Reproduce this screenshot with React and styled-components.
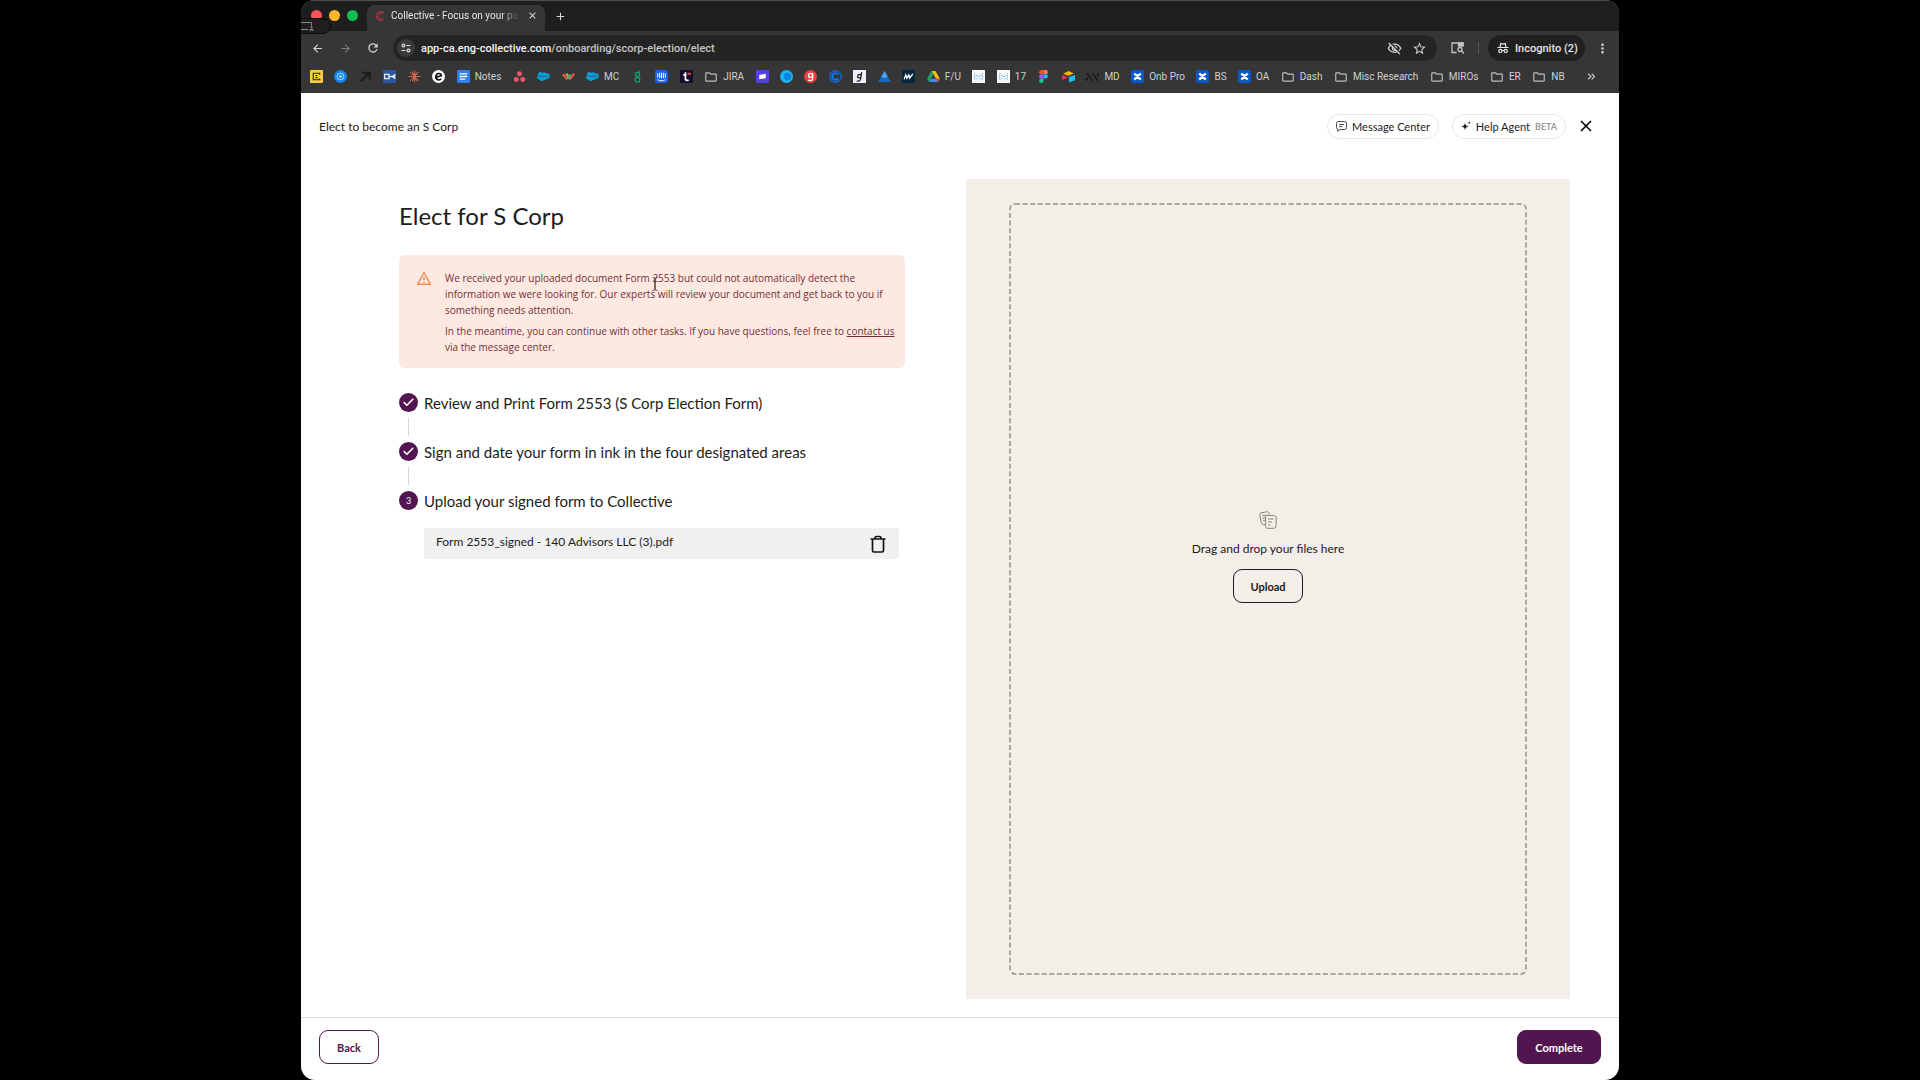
import React from "react";
import styled, { createGlobalStyle } from "styled-components";
import { Check } from "lucide-react";
import { FaSalesforce } from "react-icons/fa";
import {
  MdArrowBack,
  MdArrowForward,
  MdRefresh,
  MdOutlineFolder,
  MdStarBorder,
  MdOutlineVisibilityOff,
  MdMoreVert,
  MdClose,
  MdAdd,
  MdKeyboardDoubleArrowRight,
} from "react-icons/md";

const GlobalStyle = createGlobalStyle`
  * {
    box-sizing: border-box;
  }

  body {
    margin: 0;
    background: #000000;
    font-family: Lato, "Liberation Sans", sans-serif;
    color: #1c1c1c;
  }

  button {
    font-family: inherit;
    margin: 0;
    padding: 0;
    border: none;
    background: none;
    color: inherit;
    cursor: pointer;
  }

  svg {
    display: block;
    flex-shrink: 0;
  }
`;

// Browser window
const Desktop = styled.div`
  height: 100vh;
  padding: 0 301px;
`;

const Window = styled.div`
  position: relative;
  height: 100%;
  display: flex;
  flex-direction: column;
  background: #ffffff;
  border-radius: 14px;
  overflow: hidden;
`;

const Chrome = styled.header`
  font-family: Roboto, "Liberation Sans", sans-serif;
  background: #363636;
  color: #d6d6d6;
`;

const TabStrip = styled.div`
  display: flex;
  align-items: center;
  height: 31px;
  padding-left: 10px;
  background: #1e1e1e;
  border-top: 1px solid #4c4c4c;
`;

const TrafficLights = styled.div`
  display: flex;
  gap: 7px;
  margin: 0 9px 2px 0;
`;

const Light = styled.span`
  width: 11px;
  height: 11px;
  border-radius: 50%;
  background: ${(props) => props.$color};
`;

const Tab = styled.div`
  display: flex;
  align-items: center;
  align-self: flex-end;
  width: 178px;
  height: 26px;
  padding: 0 8px 5px;
  border-radius: 8px 8px 0 0;
  background: #363636;
  margin-right: 8px;
`;

const TabTitle = styled.span`
  flex: 1;
  margin: 0 8px 0 6px;
  white-space: nowrap;
  font-size: 10px;
  color: #e6e6e6;
  mask-image: linear-gradient(90deg, #000 85%, transparent);
`;

const IconButton = styled.button`
  display: flex;
  align-items: center;
  justify-content: center;
  width: ${(props) => props.$size || 14}px;
  height: ${(props) => props.$size || 14}px;
  color: ${(props) => props.$color || "#d6d6d6"};
`;

const ShareBadge = styled.div`
  position: absolute;
  top: 18px;
  left: -12px;
  width: 42px;
  height: 16px;
  padding: 3px 0 0 11px;
  border: 1px solid #0c0c0c;
  border-radius: 8px;
  background: #1e1e1e;
`;

const Toolbar = styled.div`
  display: flex;
  align-items: center;
  height: 34px;
  padding: 0 10px 0 9px;
`;

const NavButtons = styled.div`
  display: flex;
  gap: 14px;
  margin-right: 13px;
`;

const AddressBar = styled.div`
  flex: 1;
  display: flex;
  align-items: center;
  height: 26px;
  padding: 0 11px 0 4px;
  border-radius: 13px;
  background: #242424;
`;

const SiteInfo = styled.button`
  display: flex;
  align-items: center;
  justify-content: center;
  width: 18px;
  height: 18px;
  border-radius: 50%;
  background: #3a3a3a;
`;

const Url = styled.div`
  flex: 1;
  margin-left: 6px;
  font-size: 11px;
  font-weight: 500;
  color: #c4c4c4;

  b {
    font-weight: 500;
    color: #f4f4f4;
  }
`;

const AddressActions = styled.div`
  display: flex;
  gap: 11px;
`;

const SidePanel = styled.div`
  margin: 0 13px 0 14px;
`;

const ToolbarDivider = styled.span`
  width: 1px;
  height: 12px;
  margin-right: 9px;
  background: #5a5a5a;
`;

const IncognitoChip = styled.div`
  display: flex;
  align-items: center;
  gap: 6px;
  height: 26px;
  width: 97px;
  padding: 0 9px;
  margin-right: 10px;
  border-radius: 13px;
  background: #202020;
  font-size: 11px;
  font-weight: 500;
  white-space: nowrap;
  color: #e6e6e6;
`;

const BookmarksBar = styled.nav`
  display: flex;
  align-items: center;
  height: 28px;
  padding: 0 22px 5px 9px;
`;

const BookmarkList = styled.div`
  flex: 1;
  display: flex;
  align-items: center;
  justify-content: space-between;
  margin-right: 20px;
`;

const Bookmark = styled.a`
  display: flex;
  align-items: center;
  gap: 5px;
  height: 14px;
  font-size: 10px;
  line-height: 14px;
  white-space: nowrap;
  color: #d0d0d0;
  text-decoration: none;
`;

// Onboarding page
const PageHeader = styled.div`
  display: flex;
  align-items: center;
  height: 66px;
  padding: 0 26px 0 18px;
`;

const PageName = styled.span`
  flex: 1;
  font-size: 12px;
`;

const PillButton = styled.button`
  display: flex;
  align-items: center;
  justify-content: center;
  gap: 5px;
  width: ${(props) => props.$width}px;
  height: 25px;
  margin-right: 13px;
  border: 1px solid #e8e8e8;
  border-radius: 13px;
  font-size: 11px;
  white-space: nowrap;
`;

const Beta = styled.span`
  font-size: 9px;
  font-weight: 700;
  color: #9a9a9a;
`;

const Main = styled.main`
  flex: 1;
  min-height: 0;
  display: grid;
  grid-template-columns: 506fr 604fr;
  gap: 61px;
  padding: 20px 49px 18px 98px;
`;

const Title = styled.h1`
  margin: 20px 0 23px;
  font-size: 24px;
  line-height: 33px;
  font-weight: 400;
`;

const Alert = styled.div`
  position: relative;
  display: flex;
  gap: 13px;
  padding: 15px 10px 13px 17px;
  border-radius: 5px;
  background: #fee9e1;
  font-family: "Open Sans", "Liberation Sans", sans-serif;
  font-size: 10px;
  line-height: 16px;
  color: #722f37;

  p {
    margin: 0 0 5px;
  }

  p:last-child {
    margin: 0;
  }

  a {
    color: inherit;
  }
`;

const TextCursor = styled.svg`
  position: absolute;
  top: 22px;
  left: 252px;
`;

const Steps = styled.ol`
  list-style: none;
  margin: 25px 0 0;
  padding: 0;
`;

const Step = styled.li`
  display: flex;
  align-items: center;
  gap: 6px;
  height: 19px;
  font-size: 15px;
`;

const StepDot = styled.span`
  display: flex;
  align-items: center;
  justify-content: center;
  width: 19px;
  height: 19px;
  border-radius: 50%;
  background: #52154f;
  color: #ffffff;
  font-size: 9px;
`;

const Connector = styled.li`
  width: 1px;
  height: 18px;
  margin: 6px 0 6px 9px;
  background: #d6d6d6;
`;

const FileRow = styled.div`
  display: flex;
  align-items: center;
  justify-content: space-between;
  height: 31px;
  margin: 18px 6px 0 25px;
  padding: 0 12px;
  border-radius: 3px;
  background: #f0f0f0;
  font-size: 12px;
`;

const FileName = styled.span`
  padding-bottom: 5px;
`;

const DropPanel = styled.section`
  padding: 25px 44px;
  background: #f1efe8;
`;

const DropZone = styled.div`
  position: relative;
  display: flex;
  flex-direction: column;
  align-items: center;
  justify-content: center;
  gap: 12px;
  height: 100%;
  padding-bottom: 64px;
  border-radius: 5px;
  background: #f3eee8;
  font-size: 12px;
  line-height: 16px;
`;

const DashedOutline = styled.svg`
  position: absolute;
  inset: 0;
  width: 100%;
  height: 100%;
  overflow: visible;
  pointer-events: none;
`;

const Button = styled.button`
  width: ${(props) => props.$width}px;
  height: 34px;
  border: 1px solid ${(props) => props.$border || "#52154f"};
  border-radius: 9px;
  background: ${(props) => (props.$filled ? "#52154f" : "transparent")};
  color: ${(props) => (props.$filled ? "#ffffff" : props.$border || "#52154f")};
  font-size: 11px;
  font-weight: 700;
`;

const PageFooter = styled.footer`
  display: flex;
  justify-content: space-between;
  height: 63px;
  padding: 12px 18px 0;
  border-top: 1px solid #d9d9d9;
`;

// Favicons share a 12 unit box
const Fav = ({ children }) => (
  <svg width="13" height="13" viewBox="0 0 12 12" fill="none">
    {children}
  </svg>
);

const Tile = ({ color, radius = 1, children }) => (
  <Fav>
    <rect width="12" height="12" rx={radius} fill={color} />
    {children}
  </Fav>
);

const Jira = () => (
  <Tile color="#0c57c9" radius={2}>
    <path d="M3 3.2C5 5.6 7 5.6 9 3.2M3 8.8C5 6.4 7 6.4 9 8.8" stroke="#fff" strokeWidth="2" />
  </Tile>
);

const MetricGrid = () => (
  <Tile color="#f7fafc" radius={0}>
    <path
      d="M2.5 3v6.5M9.5 3v6.5M4 4.5l2 2 2-2M4.5 7.5v2M7.5 7.5v2"
      stroke="#6fa9cf"
      strokeWidth="1"
      strokeDasharray="1 .7"
    />
  </Tile>
);

const Folder = () => <MdOutlineFolder size={14} color="#bdbdbd" />;
const Salesforce = () => <FaSalesforce size={13} color="#0d9dda" />;

const bookmarks = [
  {
    icon: (
      <Tile color="#f9cf45">
        <path d="M3 2.5v7M2.5 3h7M2.5 9h7M9 3v1.5M9 7.5V9M5 5h2M5 7h2" stroke="#2a2413" strokeWidth="1" />
      </Tile>
    ),
  },
  {
    icon: (
      <Fav>
        <circle cx="6" cy="6" r="6" fill="#1687ee" />
        <circle cx="6" cy="6" r="3" stroke="#8fd0ff" strokeWidth="1" />
        <circle cx="6" cy="6" r="1.2" fill="#bfe4ff" />
      </Fav>
    ),
  },
  {
    icon: (
      <Fav>
        <path d="M1.5 10.5L9 3M3 2.5h7v7" stroke="#1c1c1c" strokeWidth="2" />
      </Fav>
    ),
  },
  {
    icon: (
      <Tile color="#2f55a5" radius={0}>
        <path d="M1.5 4h4v4h-4zM6 6h5.5M11.5 4L8.5 6l3 2" stroke="#e3e9f5" strokeWidth="1.2" />
      </Tile>
    ),
  },
  {
    icon: (
      <Fav>
        <path
          d="M6 .5v11M.5 6h11M2 2l8 8M10 2l-8 8M3.9 1.5l4.2 9M8.1 1.5l-4.2 9"
          stroke="#e0664a"
          strokeWidth=".9"
        />
      </Fav>
    ),
  },
  {
    icon: (
      <Fav>
        <circle cx="6" cy="6" r="6" fill="#fff" />
        <path
          d="M3.3 6.8L8.7 5.3C8.3 2.4 4 2.4 3.5 6c-.2 3.3 3.5 3.8 5 2"
          stroke="#111"
          strokeWidth="1.5"
        />
      </Fav>
    ),
  },
  {
    label: "Notes",
    icon: (
      <Tile color="#3080ea">
        <path d="M2.5 3.5h7M2.5 6h7M2.5 8.5h5" stroke="#fff" strokeWidth="1.2" />
      </Tile>
    ),
  },
  {
    icon: (
      <Fav>
        <circle cx="6" cy="3.5" r="2.3" fill="#f0566a" />
        <circle cx="3" cy="8.7" r="2.3" fill="#f0566a" />
        <circle cx="9" cy="8.7" r="2.3" fill="#f0566a" />
      </Fav>
    ),
  },
  { icon: <Salesforce /> },
  {
    icon: (
      <Fav>
        <path d="M.8 4l4 4.5" stroke="#ef5b3c" strokeWidth="2" />
        <path d="M3.8 3.5l4 4.5" stroke="#f2a03d" strokeWidth="2" />
        <path d="M4.8 8.5l3-4.5" stroke="#2bb673" strokeWidth="2" />
        <path d="M7.2 8.5l4-5" stroke="#e4574d" strokeWidth="2" />
      </Fav>
    ),
  },
  { label: "MC", icon: <Salesforce /> },
  {
    icon: (
      <Fav>
        <circle cx="6" cy="4" r="1.9" stroke="#13a374" strokeWidth="1.2" />
        <circle cx="6" cy="9" r="2.2" stroke="#13a374" strokeWidth="1.2" />
        <path d="M7 2.5L8.5 .8" stroke="#13a374" strokeWidth="1.2" />
      </Fav>
    ),
  },
  {
    icon: (
      <Tile color="#1d5fe8" radius={2}>
        <path
          d="M2.5 3v4M4.3 2.5v5M6 2.5v5.2M7.7 2.5v5M9.5 3v4M2.5 9c2 1.3 5 1.3 7 0"
          stroke="#fff"
          strokeWidth=".9"
        />
      </Tile>
    ),
  },
  {
    icon: (
      <Tile color="#160c2c">
        <path d="M5 2v6.5c0 1 1.5 1.2 3 .8M3 4.5h3" stroke="#fff" strokeWidth="1.6" />
        <path d="M7 3.5h3" stroke="#f0503c" strokeWidth="1.8" />
      </Tile>
    ),
  },
  { label: "JIRA", icon: <Folder /> },
  {
    icon: (
      <Tile color="#5243dc">
        <path d="M3 4.5l6-1v4l-6 1z" fill="#fff" />
      </Tile>
    ),
  },
  {
    icon: (
      <Fav>
        <circle cx="6" cy="6" r="6" fill="#18b4f2" />
        <circle cx="7" cy="6" r="3.5" fill="#0b84dd" />
      </Fav>
    ),
  },
  {
    icon: (
      <Fav>
        <circle cx="6" cy="6" r="6" fill="#e8433f" />
        <circle cx="6" cy="5" r="1.8" stroke="#fff" strokeWidth="1.2" />
        <path d="M8 3v5c0 2-3 2-4 1" stroke="#fff" strokeWidth="1.2" />
      </Fav>
    ),
  },
  {
    icon: (
      <Fav>
        <circle cx="6" cy="6" r="5.3" stroke="#1467d6" strokeWidth="1.2" />
        <path d="M8.5 4.2a3 3 0 1 0 0 3.6" stroke="#1273ea" strokeWidth="2" />
      </Fav>
    ),
  },
  {
    icon: (
      <Tile color="#f1effa" radius={0}>
        <path
          d="M8 2L7 8.5C6.5 10.5 4.5 10.5 3.5 10M7.5 4.5C5 3.5 4 5 4.2 6.5c.3 1.2 2 1 3 .2"
          stroke="#222"
          strokeWidth="1.2"
        />
      </Tile>
    ),
  },
  {
    icon: (
      <Fav>
        <path d="M6 1l6 10H0z" fill="#1668c5" />
        <path d="M6 1l3 5-3 1.5L3 6z" fill="#49a4ee" />
      </Fav>
    ),
  },
  {
    icon: (
      <Tile color="#06273d" radius={0}>
        <path d="M2 8.5l1.5-4 1 3 1.8-3 .7 3 3-4" stroke="#fff" strokeWidth="1.2" />
      </Tile>
    ),
  },
  {
    label: "F/U",
    icon: (
      <Fav>
        <path d="M4.2 1h3.6L12 8H8.3z" fill="#fbbc05" />
        <path d="M4.2 1L0 8l1.9 3L6 4z" fill="#1ea362" />
        <path d="M3.8 8H12l-1.9 3H1.9z" fill="#4285f4" />
        <path d="M8.3 8H12l-1.9 3z" fill="#ea4335" />
      </Fav>
    ),
  },
  { icon: <MetricGrid /> },
  { label: "17", icon: <MetricGrid /> },
  {
    icon: (
      <Fav>
        <path d="M6 0H4a2 2 0 0 0 0 4h2z" fill="#f24e1e" />
        <path d="M6 0h2a2 2 0 0 1 0 4H6z" fill="#ff7262" />
        <path d="M6 4H4a2 2 0 0 0 0 4h2z" fill="#a259ff" />
        <circle cx="8" cy="6" r="2" fill="#1abcfe" />
        <path d="M6 8H4a2 2 0 1 0 2 2z" fill="#0acf83" />
      </Fav>
    ),
  },
  {
    icon: (
      <Fav>
        <path d="M1 3.5L6 1l5 2.2-5 2z" fill="#fcb400" />
        <path d="M6.5 6.5L12 4.5v5l-5.5 2z" fill="#18bfff" />
        <path d="M0 4.5l5.3 2.2L0 9.5z" fill="#f82b60" />
      </Fav>
    ),
  },
  {
    label: "MD",
    icon: (
      <Fav>
        <path d="M1 3l5 7M6 3l5 7M1 7v3M11 3v3" stroke="#1a1a1a" strokeWidth="1.6" />
      </Fav>
    ),
  },
  { label: "Onb Pro", icon: <Jira /> },
  { label: "BS", icon: <Jira /> },
  { label: "OA", icon: <Jira /> },
  { label: "Dash", icon: <Folder /> },
  { label: "Misc Research", icon: <Folder /> },
  { label: "MIROs", icon: <Folder /> },
  { label: "ER", icon: <Folder /> },
  { label: "NB", icon: <Folder /> },
];

const BrowserChrome = () => (
  <Chrome>
    <TabStrip>
      <TrafficLights>
        <Light $color="#ff4f57" />
        <Light $color="#fdb52b" />
        <Light $color="#0fbf53" />
      </TrafficLights>
      <Tab>
        <svg width="10" height="10" viewBox="0 0 10 10" fill="none" stroke="#c8324a">
          <path d="M8.5 2.2A4 4 0 1 0 8.5 7.8" strokeWidth="1.8" strokeDasharray="1.6 .7" />
          <path d="M7 3.8A2 2 0 1 0 7 6.2" strokeWidth="1" strokeDasharray="1 .6" />
        </svg>
        <TabTitle>Collective - Focus on your pa</TabTitle>
        <IconButton $size={10} aria-label="Close tab">
          <MdClose size={11} />
        </IconButton>
      </Tab>
      <IconButton $size={14} aria-label="New tab">
        <MdAdd size={13} />
      </IconButton>
      <ShareBadge>
        <svg width="13" height="9" viewBox="0 0 13 9" fill="none" stroke="#8a8a8a">
          <path d="M0 .5h10.5v3M0 7.5h7" />
          <circle cx="10.5" cy="5" r="1" fill="#8a8a8a" stroke="none" />
          <path d="M8 8.5c.5-2.5 4.5-2.5 5 0z" fill="#8a8a8a" stroke="none" />
        </svg>
      </ShareBadge>
    </TabStrip>
    <Toolbar>
      <NavButtons>
        <IconButton aria-label="Back">
          <MdArrowBack size={13} />
        </IconButton>
        <IconButton aria-label="Forward" $color="#7b7b7b">
          <MdArrowForward size={13} />
        </IconButton>
        <IconButton aria-label="Reload">
          <MdRefresh size={14} />
        </IconButton>
      </NavButtons>
      <AddressBar>
        <SiteInfo aria-label="Site information">
          <svg width="10" height="10" viewBox="0 0 10 10" fill="none" stroke="#e0e0e0" strokeWidth="1.2">
            <circle cx="2.5" cy="2.5" r="1.4" />
            <path d="M5.5 2.5H9.5M.5 7.5h4" />
            <circle cx="7.5" cy="7.5" r="1.4" />
          </svg>
        </SiteInfo>
        <Url>
          <b>app-ca.eng-collective.com</b>/onboarding/scorp-election/elect
        </Url>
        <AddressActions>
          <IconButton aria-label="Tracking protection">
            <MdOutlineVisibilityOff size={15} />
          </IconButton>
          <IconButton aria-label="Bookmark this tab">
            <MdStarBorder size={15} />
          </IconButton>
        </AddressActions>
      </AddressBar>
      <SidePanel>
        <IconButton aria-label="Search side panel">
          <svg width="14" height="12" viewBox="0 0 14 12" fill="none" stroke="#c4c4c4" strokeWidth="1.3">
            <path d="M5.5 10.5H1V1h11v3.5" />
            <path d="M7.5 1H12v3H7.5z" fill="#c4c4c4" />
            <circle cx="9" cy="7.5" r="2" />
            <path d="M10.5 9L13 11.5" />
          </svg>
        </IconButton>
      </SidePanel>
      <ToolbarDivider />
      <IncognitoChip>
        <svg width="12" height="12" viewBox="0 0 12 12" fill="none" stroke="#e6e6e6" strokeWidth="1.2">
          <path d="M.5 5.5h11M3 5l.8-3.5 2.2.6 2.2-.6L9 5" />
          <circle cx="3.3" cy="8.9" r="1.6" />
          <circle cx="8.7" cy="8.9" r="1.6" />
          <path d="M5 8.5h2" />
        </svg>
        Incognito (2)
      </IncognitoChip>
      <IconButton aria-label="Menu">
        <MdMoreVert size={15} />
      </IconButton>
    </Toolbar>
    <BookmarksBar>
      <BookmarkList>
        {bookmarks.map(({ icon, label }, index) => (
          <Bookmark key={index} href="#">
            {icon}
            {label}
          </Bookmark>
        ))}
      </BookmarkList>
      <IconButton $size={12} aria-label="More bookmarks">
        <MdKeyboardDoubleArrowRight size={13} />
      </IconButton>
    </BookmarksBar>
  </Chrome>
);

const DoneDot = () => (
  <StepDot>
    <Check size={13} strokeWidth={3} />
  </StepDot>
);

const App = () => {
  return (
    <Desktop>
      <GlobalStyle />
      <Window>
        <BrowserChrome />

        <PageHeader>
          <PageName>Elect to become an S Corp</PageName>
          <PillButton $width={112}>
            <svg width="11" height="11" viewBox="0 0 11 11" fill="none" stroke="#333" strokeWidth=".9">
              <path d="M2.5 .5h6a2 2 0 0 1 2 2v4a2 2 0 0 1-2 2H4L1.8 10.3V8.4A2 2 0 0 1 .5 6.5v-4a2 2 0 0 1 2-2z" />
              <path d="M3 3.5h5M3 5.7h3.5" />
            </svg>
            Message Center
          </PillButton>
          <PillButton $width={114}>
            <svg width="10" height="10" viewBox="0 0 10 10" fill="#1c1c1c">
              <path d="M4 1.5c.4 2.6 1 3.4 3.8 4C5 6 4.4 6.8 4 9.5 3.6 6.8 3 6 .2 5.5 3 4.9 3.6 4.1 4 1.5z" />
              <path d="M8.2 0l.4 1.4L10 1.8l-1.4.4-.4 1.4-.4-1.4-1.4-.4 1.4-.4z" />
            </svg>
            Help Agent
            <Beta>BETA</Beta>
          </PillButton>
          <IconButton aria-label="Close" $color="#000000">
            <svg width="12" height="12" viewBox="0 0 12 12" stroke="#000" strokeWidth="1.6">
              <path d="M1 1l10 10M11 1L1 11" />
            </svg>
          </IconButton>
        </PageHeader>

        <Main>
          <section>
            <Title>Elect for S Corp</Title>
            <Alert role="alert">
              <svg width="16" height="16" viewBox="0 0 16 16" fill="none" stroke="#f2895a" strokeWidth="1.4">
                <path d="M8 2.5L14.5 14.3h-13z" strokeLinejoin="round" />
                <path d="M8 6.5v3.5M8 11.2v1.3" />
              </svg>
              <div>
                <p>
                  We received your uploaded document Form 2553 but could not automatically detect the
                  information we were looking for. Our experts will review your document and get back to you if
                  something needs attention.
                </p>
                <p>
                  In the meantime, you can continue with other tasks. If you have questions, feel free to{" "}
                  <a href="#">contact us</a> via the message center.
                </p>
              </div>
              <TextCursor width="8" height="14" viewBox="0 0 8 14" fill="none" stroke="#4a3a38">
                <path d="M1.5 .5C3 .5 4 1 4 2v10c0 1-1 1.5-2.5 1.5M6.5 .5C5 .5 4 1 4 2v10c0 1 1 1.5 2.5 1.5" />
              </TextCursor>
            </Alert>
            <Steps>
              <Step>
                <DoneDot />
                Review and Print Form 2553 (S Corp Election Form)
              </Step>
              <Connector aria-hidden="true" />
              <Step>
                <DoneDot />
                Sign and date your form in ink in the four designated areas
              </Step>
              <Connector aria-hidden="true" />
              <Step>
                <StepDot>3</StepDot>
                Upload your signed form to Collective
              </Step>
            </Steps>
            <FileRow>
              <FileName>Form 2553_signed - 140 Advisors LLC (3).pdf</FileName>
              <IconButton $size={18} aria-label="Delete file">
                <svg width="16" height="18" viewBox="0 0 16 18" fill="none" stroke="#111" strokeWidth="1.7">
                  <path d="M.5 4h15M5 3.5C5 2 5.5 1.5 6.5 1.5h3C10.5 1.5 11 2 11 3.5M2.5 4v11.5c0 1 .5 1.5 1.5 1.5h8c1 0 1.5-.5 1.5-1.5V4" />
                </svg>
              </IconButton>
            </FileRow>
          </section>

          <DropPanel>
            <DropZone>
              <DashedOutline aria-hidden="true">
                <rect
                  width="100%"
                  height="100%"
                  rx="5"
                  fill="none"
                  stroke="#958f89"
                  strokeWidth="1.5"
                  strokeDasharray="5 2.6"
                />
              </DashedOutline>
              <svg width="18" height="18" viewBox="0 0 18 18" fill="none" stroke="#6d6862" strokeWidth=".8">
                <path d="M6 13.5C3 14 2.5 12.5 2 10L.8 4.5C.5 2.5 1.5 2 3 1.6L7.5 .8C9.5 .5 10 1.5 10.3 3.5M3 5l4.5-1M3.5 7.5L6 7M4 10l2-.4" />
                <path d="M8.5 4.5h6.2c2 0 2.6 1 2.6 2.5L17 15c-.2 1.5-1 2.3-2.5 2.3H9c-1.8 0-2.5-1-2.4-2.5L6.5 7c0-1.5.5-2.5 2-2.5zM9 8h5.5M9 11h4M9 14h2.5" />
              </svg>
              Drag and drop your files here
              <Button $width={70} $border="#1c1c1c">
                Upload
              </Button>
            </DropZone>
          </DropPanel>
        </Main>

        <PageFooter>
          <Button $width={60}>Back</Button>
          <Button $width={84} $filled>
            Complete
          </Button>
        </PageFooter>
      </Window>
    </Desktop>
  );
};

export default App;
